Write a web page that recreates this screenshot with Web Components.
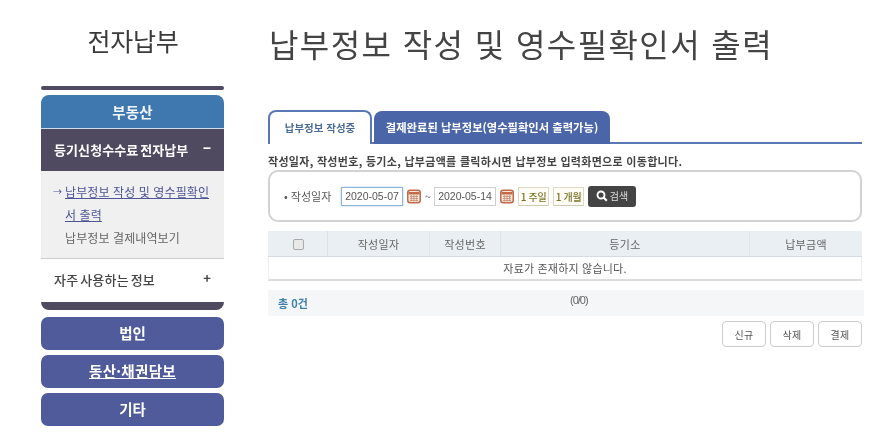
<!DOCTYPE html>
<html lang="ko"><head><meta charset="utf-8"><style>
html,body{margin:0;padding:0;background:#fff}
body{font-family:"Noto Sans CJK KR","Liberation Sans",sans-serif;color:#444}
</style></head><body>
<app-shell>
  <side-nav></side-nav>
  <main-panel></main-panel>
</app-shell>
<script>
const F='"Noto Sans CJK KR","Liberation Sans",sans-serif';
function def(name,html){customElements.define(name,class extends HTMLElement{constructor(){super();this.attachShadow({mode:'open'}).innerHTML=html;}});}
const cal=`<svg width="14" height="15" viewBox="0 0 14 15" style="flex:none"><rect x=".75" y="1.25" width="12.5" height="12.5" rx="2.5" fill="#f6e8dc" stroke="#c4694a" stroke-width="1.5"/><path d="M1.5 3h11v2.5h-11z" fill="#c4694a"/><path d="M3 7.5h8M3 9.5h8M3 11.5h8M4.3 6v6.5M7 6v6.5M9.7 6v6.5" stroke="#c98a6d" stroke-width=".8"/></svg>`;
def('app-shell',`<style>:host{display:flex;width:889px;height:437px;overflow:hidden;box-sizing:border-box;padding-left:41px;gap:44px;filter:blur(.4px)}</style><slot></slot>`);
def('nav-group',`<style>:host{display:flex;align-items:center;justify-content:center;height:33px;background:#4f5b9b;border-radius:7px;color:#fff;font:700 14.5px/1 ${F}}</style><slot></slot>`);
def('side-nav',`<style>
:host{display:block;width:183px;flex:none}
h2{margin:0;height:86px;box-sizing:border-box;padding-top:24px;text-align:center;font:400 25px/32px ${F};color:#3a3a3a;letter-spacing:-.2px;text-indent:1px}
.bar{height:4px;background:#4f4a5f;border-radius:2px;margin-bottom:5px}
.head{height:33px;background:#3f78ae;border-radius:8px 8px 0 0;color:#f2f6fa;font:700 14.5px/33px ${F};text-align:center;border-bottom:1px solid #cfdcea;letter-spacing:.2px}
.open{height:42px;box-sizing:border-box;padding:0 13px 2px;background:#4f4a60;color:#fff;display:flex;align-items:center;justify-content:space-between;font:700 13px/1 ${F};letter-spacing:.1px;word-spacing:-2px}
.open b,.closed b{position:relative;top:-2px;font-size:13px}
.sub{height:88px;box-sizing:border-box;background:#f0f0f1;padding:9px 12px 0 12px;border-bottom:1px solid #ccc;font:400 12px/23px ${F};color:#666;letter-spacing:.1px}
.sub a{color:#4d5595;text-decoration:underline}
.sub div{padding-left:12px;position:relative;width:145px;word-break:break-all}
.sub i{position:absolute;left:0;top:0;font-style:normal;color:#4d5595;font-size:9px}
.closed{height:43px;box-sizing:border-box;padding:0 13px 2px;background:#fff;color:#444;display:flex;align-items:center;justify-content:space-between;font:500 13px/1 ${F};letter-spacing:.2px;word-spacing:-2px}
.end{height:8px;background:#4f4a60;border-radius:0 0 8px 8px;margin-bottom:7px}
nav-group{margin-bottom:5px}
.u{text-decoration:underline;letter-spacing:.3px}
</style>
<h2>전자납부</h2><div class="bar"></div>
<div class="head">부동산</div>
<div class="open"><span>등기신청수수료 전자납부</span><b>−</b></div>
<div class="sub"><div><i>→</i><a>납부정보 작성 및 영수필확인서 출력</a></div><div>납부정보 결제내역보기</div></div>
<div class="closed"><span>자주 사용하는 정보</span><b>+</b></div>
<div class="end"></div>
<nav-group>법인</nav-group><nav-group><span class="u">동산·채권담보</span></nav-group><nav-group>기타</nav-group>`);
def('tab-bar',`<style>
:host{display:flex;gap:2px;height:34px;box-sizing:border-box;border-bottom:2px solid #5a79b4;align-items:flex-end;font:700 10.5px/1 ${F}}
.t{height:33px;box-sizing:border-box;display:flex;align-items:center;justify-content:center;border-radius:8px 8px 0 0;margin-bottom:-2px;white-space:nowrap}
.a{width:104px;background:#fff;border:2px solid #5a79b4;border-bottom:0;color:#4a6a97;height:34px}
.b{width:236px;background:#4b66a8;color:#fff;font-size:11.3px}
</style><div class="t a">납부정보 작성중</div><div class="t b">결제완료된 납부정보(영수필확인서 출력가능)</div>`);
def('search-box',`<style>
:host{display:flex;align-items:center;height:52px;box-sizing:border-box;border:2px solid #d2d2d2;border-radius:10px;padding:0 0 0 14px;font:400 11px/1 ${F};color:#555;gap:4px}
.l{width:53px;letter-spacing:0;white-space:pre}
.d{height:19px;box-sizing:border-box;border:1px solid #cfcfcf;font:400 10.5px/17px "Liberation Sans",sans-serif;color:#555;text-align:center}
.d.f{width:62px;border-color:#8fb6d9;box-shadow:0 0 2px #a8c8e6}
.d.g{width:62px}
.t{width:5px;overflow:visible}
.p{width:31px;height:19px;box-sizing:border-box;border:1px solid #ddd9c2;border-bottom-color:#cfcbb0;background:#fdfcf6;color:#7f7328;font:500 10px/17px ${F};text-align:center;letter-spacing:-.3px;white-space:nowrap}
.s{height:21px;width:48px;box-sizing:border-box;background:#444;color:#ddd;border-radius:3px;font:400 10px/1 ${F};display:flex;align-items:center;justify-content:center;gap:2px}
</style><span class="l">• 작성일자</span><span class="d f">2020-05-07</span>${cal}<span class="t">~</span><span class="d g">2020-05-14</span>${cal}<span class="p">1 주일</span><span class="p">1 개월</span><span class="s"><svg width="12" height="12" viewBox="0 0 12 12"><circle cx="5" cy="5" r="3.5" fill="none" stroke="#fff" stroke-width="1.9"/><path d="M7.6 7.6l3.2 3.2" stroke="#fff" stroke-width="2.1"/></svg>검색</span>`);
def('data-table',`<style>
:host{display:block;font:400 11px/1 ${F};color:#666}
.g{display:grid;grid-template-columns:60px 102px 71px 249px 112px}
.h>div{height:26px;padding-top:1px;background:#eaeff3;border-right:1px solid #dde3e8;border-bottom:1px solid #d5dbe0;box-sizing:border-box;display:flex;align-items:center;justify-content:center;letter-spacing:.3px}
.h>div:last-child{border-right:0}
.c{width:11px;height:11px;box-sizing:border-box;border:1px solid #aaa;border-radius:2px;background:#e9e9e9;margin-left:1px}
.r{height:24px;padding-top:1px;box-sizing:border-box;border-bottom:2px solid #ddd;border-left:1px solid #eee;border-right:1px solid #eee;display:flex;align-items:center;justify-content:center;color:#555;letter-spacing:.2px}
</style><div class="g h"><div><span class="c"></span></div><div>작성일자</div><div>작성번호</div><div>등기소</div><div>납부금액</div></div><div class="r">자료가 존재하지 않습니다.</div>`);
def('page-bar',`<style>
:host{display:flex;height:26px;background:#f5f6f8;margin:9px -2px 0 0;padding:0 10px;box-sizing:border-box;font:400 10px/1 ${F};color:#666;align-items:flex-start}
b{color:#3f7fa8;font:700 11px/26px ${F};flex:none;width:292px}
span{padding-top:5px;letter-spacing:-1px;font:400 11px/1 "Liberation Sans",sans-serif}
</style><b>총 0건</b><span>(0/0)</span>`);
def('act-btn',`<style>:host{display:flex;align-items:center;justify-content:center;width:44px;height:26px;padding-top:1px;box-sizing:border-box;border:1px solid #ccc;border-radius:4px;background:#fff;font:400 10px/1 ${F};color:#555;letter-spacing:.3px}</style><slot></slot>`);
def('main-panel',`<style>
:host{display:block;width:594px;flex:none}
h1{margin:0;height:110px;box-sizing:border-box;padding:20px 0 0 1px;font:400 32px/46px ${F};color:#444;letter-spacing:1.4px;white-space:nowrap}
p{margin:0;height:26px;box-sizing:border-box;padding-top:11px;font:700 11px/12px ${F};color:#444;letter-spacing:.3px;white-space:nowrap}
data-table{margin-top:9px}
.acts{display:flex;justify-content:flex-end;gap:4px;margin-top:5px}
</style><h1>납부정보 작성 및 영수필확인서 출력</h1><tab-bar></tab-bar><p>작성일자, 작성번호, 등기소, 납부금액를 클릭하시면 납부정보 입력화면으로 이동합니다.</p><search-box></search-box><data-table></data-table><page-bar></page-bar><div class="acts"><act-btn>신규</act-btn><act-btn>삭제</act-btn><act-btn>결제</act-btn></div>`);
</script>
</body></html>
